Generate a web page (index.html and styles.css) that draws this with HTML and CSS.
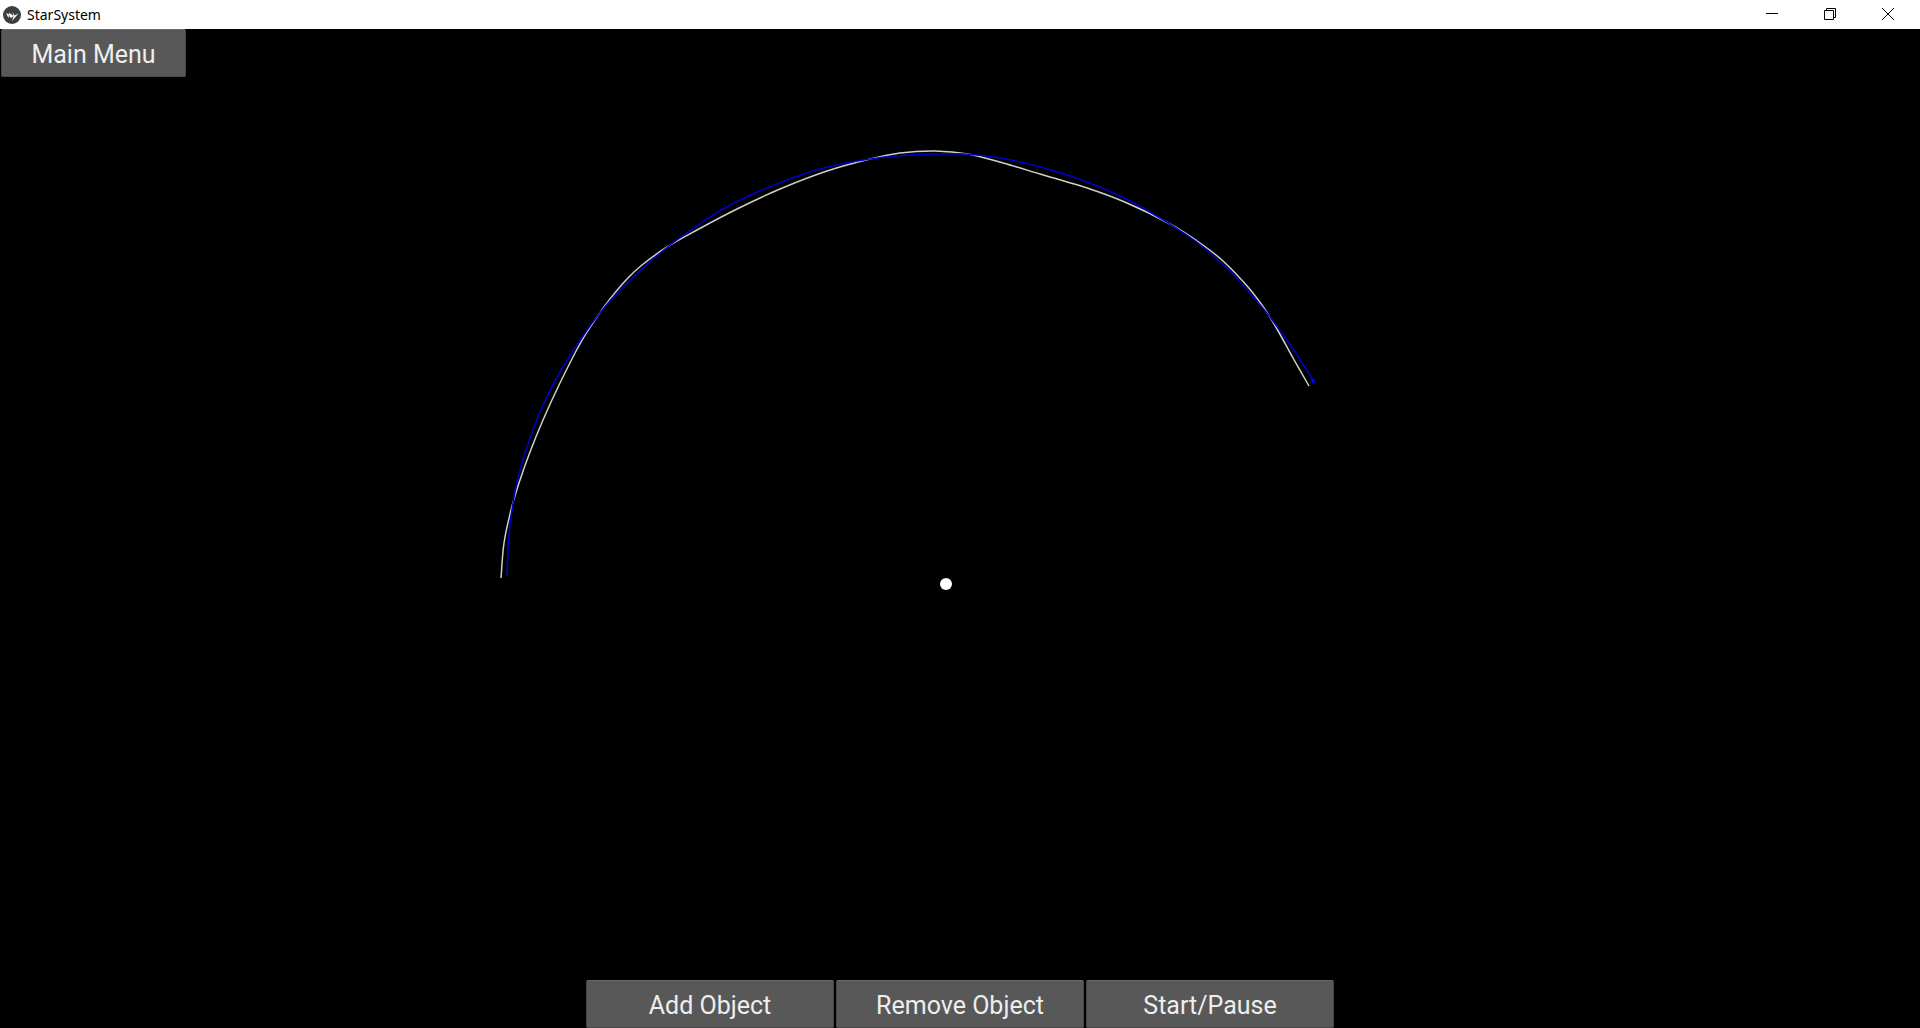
FILE: index.html
```html
<!DOCTYPE html>
<html lang="en">
<head>
<meta charset="utf-8">
<title>StarSystem</title>
<link rel="stylesheet" href="styles.css">
</head>
<body>
<header class="titlebar">
  <svg class="app-icon" viewBox="0 0 18 18" width="18" height="18" aria-hidden="true">
    <circle cx="9" cy="9" r="9" fill="#3c3f42"/>
    <path d="M3 7L6 8.500L5.500 12Z M6 6.500L10.500 10L8 12L6.500 10.500Z M9.500 6L11.500 9.500L15.500 7.500L12 11.500L9 15L10.500 10.500Z" fill="#fff"/>
  </svg>
  <h1 class="title">StarSystem</h1>
  <div class="window-controls">
    <button class="window-button" aria-label="Minimize"><svg viewBox="0 0 12 12" width="12" height="12"><path d="M0 5.500H12"/></svg></button>
    <button class="window-button" aria-label="Restore"><svg viewBox="0 0 12 12" width="12" height="12"><path d="M.5 2.500H9.500V11.500H.5ZM2.500 2.500V.5H11.500V9.500H9.500"/></svg></button>
    <button class="window-button" aria-label="Close"><svg viewBox="0 0 12 12" width="12" height="12"><path d="M0 0L12 12M12 0L0 12"/></svg></button>
  </div>
</header>
<main class="space">
  <svg class="orbits" viewBox="0 29 1920 999" aria-hidden="true">
    <path class="trail trail-white" data-points="501,578 504,543 511,510 519,483 530,452 543,420 560,383 581,342 597,317 610,299 627,279 642,265 667,247 697,230 737,209 780,189 827,171 870,159 900,153 935,151 968,154 1003,163 1040,174 1090,189 1127,203 1170,224 1200,243 1223,261 1248,287 1264,308 1277,329 1293,358 1309,386"/>
    <path class="trail trail-blue" data-points="507,576 509,535 514,497 520,470 530,438 543,405 560,372 585,333 599,314 619,291 642,269 670,245 697,226 723,209 753,194 787,180 820,169 857,161 895,156 935,154 965,154 1000,158 1037,166 1070,176 1107,190 1143,208 1187,235 1209,252 1233,274 1256,300 1270,317 1293,349 1313,380"/>
    <circle cx="1313" cy="381" r="2" fill="#00f"/>
    <circle cx="946" cy="584" r="6" fill="#fff"/>
  </svg>
  <nav class="top-actions"><button class="button button-menu">Main Menu</button></nav>
  <div class="bottom-actions">
    <button class="button">Add Object</button>
    <button class="button">Remove Object</button>
    <button class="button">Start/Pause</button>
  </div>
</main>
<script src="orbits.js"></script>
</body>
</html>
```
FILE: styles.css
```css
* { box-sizing: border-box; }
body {
  margin: 0;
  min-height: 100vh;
  display: flex;
  flex-direction: column;
  background: #000;
}
.titlebar {
  display: flex;
  align-items: center;
  height: 29px;
  padding: 0 3px;
  background: #fff;
  color: #000;
}
.title {
  margin: 0 0 0 6px;
  font: 400 14px/28px "Noto Sans", sans-serif;
}
.window-controls {
  display: flex;
  align-self: flex-start;
  margin-left: auto;
  height: 28px;
}
.window-button {
  display: grid;
  place-items: center;
  width: 58px;
  padding: 0;
  border: 0;
  background: none;
}
.window-button path { fill: none; stroke: #000; stroke-width: 1; }
.space {
  position: relative;
  flex: 1;
  display: flex;
  flex-direction: column;
  justify-content: space-between;
}
.orbits {
  position: absolute;
  inset: 0;
  width: 100%;
  height: 100%;
}
.trail { fill: none; stroke-width: 1.5; }
.trail-white { stroke: #d0d0c8; }
.trail-blue { stroke: #0000cc; }
.top-actions, .bottom-actions {
  position: relative;
  display: flex;
}
.top-actions { padding-left: 1px; }
.bottom-actions { justify-content: center; gap: 2px; }
.button {
  width: 248px;
  height: 48px;
  padding: 4px 0 0;
  border: 1px solid #484848;
  border-top-color: #6a6a6a;
  border-radius: 2px;
  background: #585858;
  color: #eee;
  font: 400 25px/42px Roboto, sans-serif;
}
.button-menu { width: 185px; }
```
FILE: orbits.js
```js
// Join each trail's recorded positions with a smooth curve.
document.querySelectorAll(".trail").forEach(function (trail) {
  var pts = trail.dataset.points.split(" ").map(function (p) {
    return p.split(",").map(Number);
  });
  var d = "M" + pts[0];
  for (var i = 0; i < pts.length - 1; i++) {
    var a = pts[i - 1] || pts[i], b = pts[i], c = pts[i + 1], e = pts[i + 2] || c;
    d += "C" + [
      b[0] + (c[0] - a[0]) / 6, b[1] + (c[1] - a[1]) / 6,
      c[0] - (e[0] - b[0]) / 6, c[1] - (e[1] - b[1]) / 6,
      c[0], c[1]
    ];
  }
  trail.setAttribute("d", d);
});
```
